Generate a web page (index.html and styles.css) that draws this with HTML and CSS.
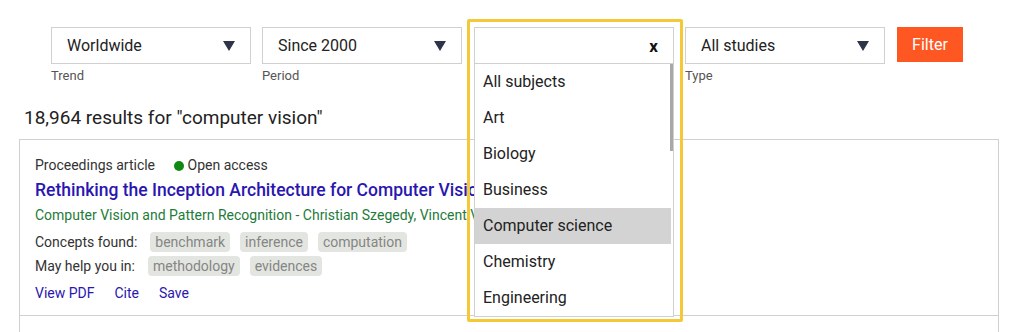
FILE: index.html
```html
<!DOCTYPE html>
<html>
<head>
<meta charset="utf-8">
<link rel="stylesheet" href="styles.css">
</head>
<body>
<div class="filters">
  <div class="field">
    <div class="select"><span>Worldwide</span><span class="arrow"></span></div>
    <div class="label">Trend</div>
  </div>
  <div class="field">
    <div class="select"><span>Since 2000</span><span class="arrow"></span></div>
    <div class="label">Period</div>
  </div>
  <div class="field subject">
    <div class="select open"><span></span><span class="clear">x</span></div>
    <div class="focus-ring"></div>
    <ul class="menu">
      <li>All subjects</li>
      <li>Art</li>
      <li>Biology</li>
      <li>Business</li>
      <li class="active">Computer science</li>
      <li>Chemistry</li>
      <li>Engineering</li>
      <li class="thumb"></li>
    </ul>
  </div>
  <div class="field type">
    <div class="select"><span>All studies</span><span class="arrow"></span></div>
    <div class="label">Type</div>
  </div>
  <button class="filter-btn">Filter</button>
</div>

<h2 class="count">18,964 results for "computer vision"</h2>

<div class="card">
  <div class="meta">Proceedings article <span class="oa"><span class="dot"></span>Open access</span></div>
  <a class="title">Rethinking the Inception Architecture for Computer Vision</a>
  <div class="source">Computer Vision and Pattern Recognition - Christian Szegedy, Vincent Vanhoucke</div>
  <div class="row first"><span class="rlabel">Concepts found:</span><span class="tag">benchmark</span><span class="tag">inference</span><span class="tag">computation</span></div>
  <div class="row"><span class="rlabel">May help you in:</span><span class="tag">methodology</span><span class="tag">evidences</span></div>
  <div class="links"><a>View PDF</a><a>Cite</a><a>Save</a></div>
</div>
<div class="card next"></div>
</body>
</html>
```
FILE: styles.css
```css
* { box-sizing: border-box; }
body {
  margin: 0;
  font-family: Roboto, "Liberation Sans", sans-serif;
  color: #222;
  background: #fff;
  overflow: hidden;
  height: 332px;
}
.filters {
  display: flex;
  align-items: flex-start;
  gap: 11px;
  padding: 27px 0 0 51px;
}
.field {
  width: 200px;
  position: relative;
}
.field.subject { margin-left: 1px; }
.select {
  height: 37px;
  border: 1px solid #d0d0d0;
  display: flex;
  align-items: center;
  justify-content: space-between;
  padding: 0 15px 0 15px;
  font-size: 16px;
  color: #222;
  background: #fff;
}
.arrow {
  width: 0; height: 0;
  border-left: 6px solid transparent;
  border-right: 6px solid transparent;
  border-top: 10px solid #2e3548;
}
.clear {
  font-weight: 700;
  font-size: 17px;
  color: #111;
}
.label {
  font-size: 13px;
  color: #555;
  line-height: 17px;
  margin-top: 3px;
}
.filter-btn {
  margin-left: 1px;
  width: 66px;
  height: 35px;
  border: 0;
  background: #ff5722;
  color: #fff;
  font-family: inherit;
  font-size: 16px;
  padding: 0;
}
.focus-ring {
  position: absolute;
  left: -7px; top: -8px;
  width: 216px; height: 303px;
  border: 3px solid #f4c935;
  border-radius: 2px;
  z-index: 3;
  pointer-events: none;
}
.menu {
  position: absolute;
  left: 0; top: 37px;
  width: 200px; height: 253px;
  margin: 0; padding: 0;
  list-style: none;
  background: #fff;
  border: 1px solid #d0d0d0;
  border-top: 0;
  z-index: 2;
}
.menu li {
  height: 36px;
  line-height: 36px;
  padding-left: 8px;
  font-size: 16px;
  color: #222;
  margin-right: 2px;
}
.menu li.active { background: #d3d3d3; }
.menu li.thumb {
  position: absolute;
  right: 0; top: 0;
  width: 3px; height: 87px;
  padding: 0; margin: 0;
  background: #a8a8a8;
}
.count {
  margin: 22px 0 0 24px;
  font-size: 19px;
  font-weight: 400;
  line-height: 24px;
  color: #222;
}
.card {
  margin: 9px 0 0 19px;
  width: 980px;
  border: 1px solid #d0d0d0;
  padding: 15px 16px 12px 15px;
}
.card.next {
  margin-top: -1px;
  height: 40px;
  border-bottom: 0;
}
.meta {
  font-size: 14px;
  line-height: 20px;
  color: #333;
}
.oa { margin-left: 15px; }
.dot {
  display: inline-block;
  width: 10px; height: 10px;
  border-radius: 50%;
  background: #118811;
  margin-right: 4px;
  vertical-align: -0.5px;
}
.title {
  display: block;
  font-size: 17.5px;
  font-weight: 500;
  line-height: 24px;
  margin-top: 3px;
  color: #2a16b0;
  white-space: nowrap;
}
.source {
  font-size: 14px;
  line-height: 20px;
  color: #1e7b3a;
  margin-top: 3px;
  white-space: nowrap;
}
.row {
  display: flex;
  align-items: center;
  gap: 10px;
  font-size: 14px;
  height: 24px;
  color: #333;
}
.row.first { margin-top: 5px; }
.rlabel { margin-right: 3px; }
.tag {
  background: #e3e5e0;
  color: #858585;
  border-radius: 4px;
  padding: 0 5px;
  line-height: 20px;
}
.links {
  display: flex;
  gap: 20px;
  font-size: 14px;
  line-height: 20px;
  margin-top: 5px;
}
.links a { color: #2a16b0; }
```
